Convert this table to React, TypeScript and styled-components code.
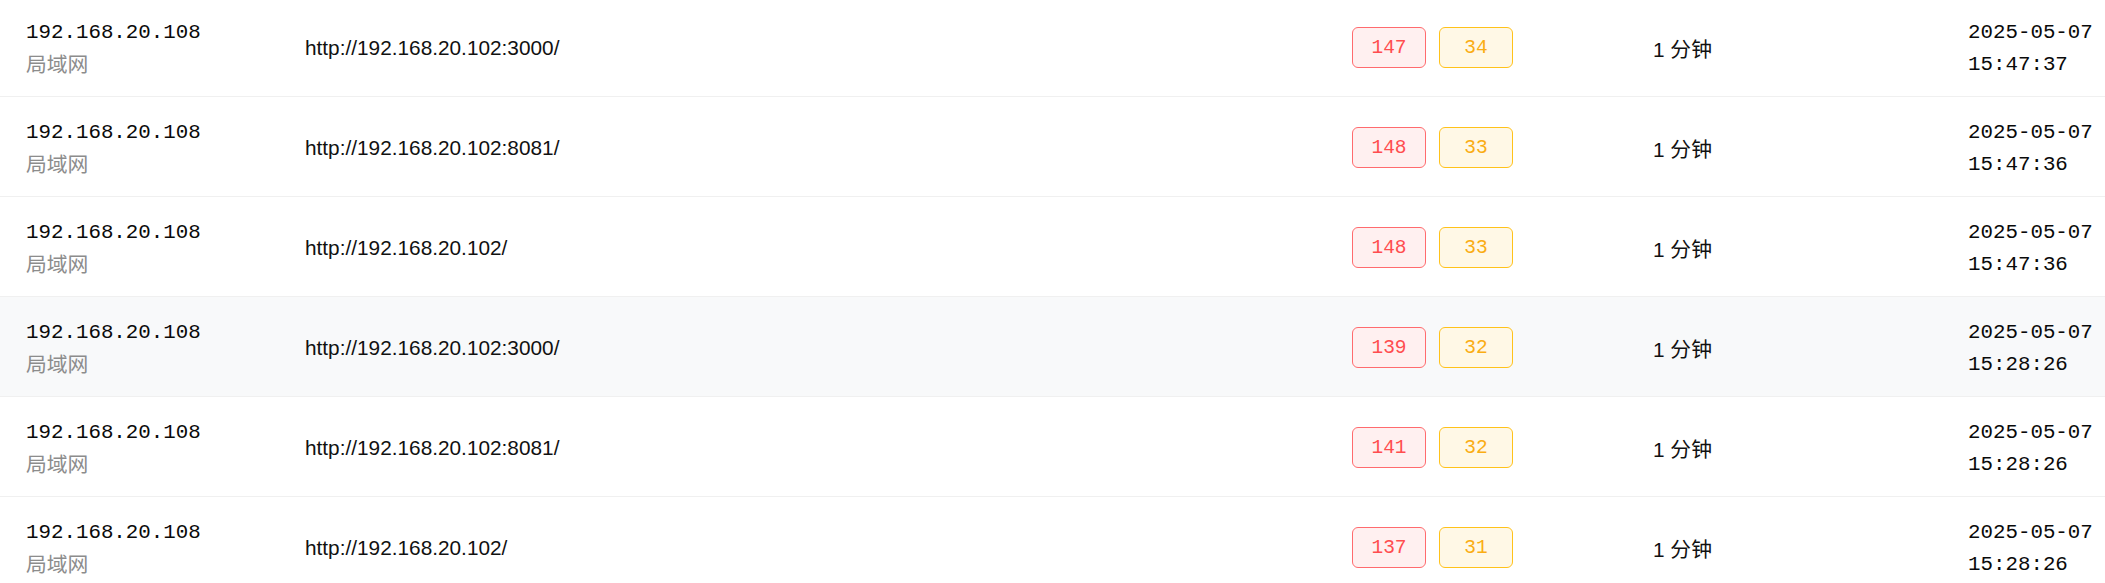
import React from "react";
import styled, { createGlobalStyle } from "styled-components";

const GlobalStyle = createGlobalStyle`
  html, body {
    margin: 0;
    padding: 0;
    background: #ffffff;
    overflow: hidden;
  }
  body {
    font-family: "Liberation Sans", "Noto Sans CJK SC", sans-serif;
    color: #111;
  }
`;

const List = styled.div`
  display: flex;
  flex-direction: column;
  margin-top: -3px;
`;

const Row = styled.div<{ $active?: boolean }>`
  display: grid;
  grid-template-columns: 279px 1047px 301px 315px 1fr;
  align-items: center;
  box-sizing: border-box;
  height: 100px;
  padding: 2px 0 0 26px;
  border-bottom: 1px solid #f0f0f0;
  background: ${(p) => (p.$active ? "#f8f9fa" : "#ffffff")};
`;

const Stack = styled.div`
  display: flex;
  flex-direction: column;
  line-height: 32px;
  padding-top: 2px;
`;

const Mono = styled.span`
  font-family: "Liberation Mono", "DejaVu Sans Mono", monospace;
  font-size: 20.8px;
  color: #0a0a0a;
  white-space: nowrap;
`;

const Sub = styled.span`
  font-family: "Liberation Sans", "Noto Sans CJK SC", sans-serif;
  font-size: 20.8px;
  color: #8c8c8c;
`;

const Url = styled.span`
  font-family: "Liberation Sans", sans-serif;
  font-size: 20.8px;
  color: #111;
  white-space: nowrap;
`;

const Badges = styled.div`
  display: flex;
  gap: 13px;
`;

const Badge = styled.span<{ $tone: "red" | "yellow" }>`
  display: inline-flex;
  align-items: center;
  justify-content: center;
  box-sizing: border-box;
  width: 74px;
  height: 41px;
  border-radius: 6px;
  font-family: "Liberation Mono", "DejaVu Sans Mono", monospace;
  font-size: 19.5px;
  border: 1px solid ${(p) => (p.$tone === "red" ? "#ff6b6e" : "#ffc21a")};
  background: ${(p) => (p.$tone === "red" ? "#fff0f0" : "#fff8e6")};
  color: ${(p) => (p.$tone === "red" ? "#ff4d4f" : "#faad14")};
`;

const Duration = styled.span`
  font-family: "Liberation Sans", "Noto Sans CJK SC", sans-serif;
  font-size: 20.8px;
  color: #111;
`;

type Item = {
  ip: string;
  url: string;
  high: number;
  mid: number;
  duration: string;
  date: string;
  time: string;
};

const items: Item[] = [
  { ip: "192.168.20.108", url: "http://192.168.20.102:3000/", high: 147, mid: 34, duration: "1 分钟", date: "2025-05-07", time: "15:47:37" },
  { ip: "192.168.20.108", url: "http://192.168.20.102:8081/", high: 148, mid: 33, duration: "1 分钟", date: "2025-05-07", time: "15:47:36" },
  { ip: "192.168.20.108", url: "http://192.168.20.102/", high: 148, mid: 33, duration: "1 分钟", date: "2025-05-07", time: "15:47:36" },
  { ip: "192.168.20.108", url: "http://192.168.20.102:3000/", high: 139, mid: 32, duration: "1 分钟", date: "2025-05-07", time: "15:28:26" },
  { ip: "192.168.20.108", url: "http://192.168.20.102:8081/", high: 141, mid: 32, duration: "1 分钟", date: "2025-05-07", time: "15:28:26" },
  { ip: "192.168.20.108", url: "http://192.168.20.102/", high: 137, mid: 31, duration: "1 分钟", date: "2025-05-07", time: "15:28:26" },
];

export default function App() {
  return (
    <>
      <GlobalStyle />
      <List>
        {items.map((it, i) => (
          <Row key={i} $active={i === 3}>
            <Stack>
              <Mono>{it.ip}</Mono>
              <Sub>局域网</Sub>
            </Stack>
            <Url>{it.url}</Url>
            <Badges>
              <Badge $tone="red">{it.high}</Badge>
              <Badge $tone="yellow">{it.mid}</Badge>
            </Badges>
            <Duration>{it.duration}</Duration>
            <Stack>
              <Mono>{it.date}</Mono>
              <Mono>{it.time}</Mono>
            </Stack>
          </Row>
        ))}
      </List>
    </>
  );
}
